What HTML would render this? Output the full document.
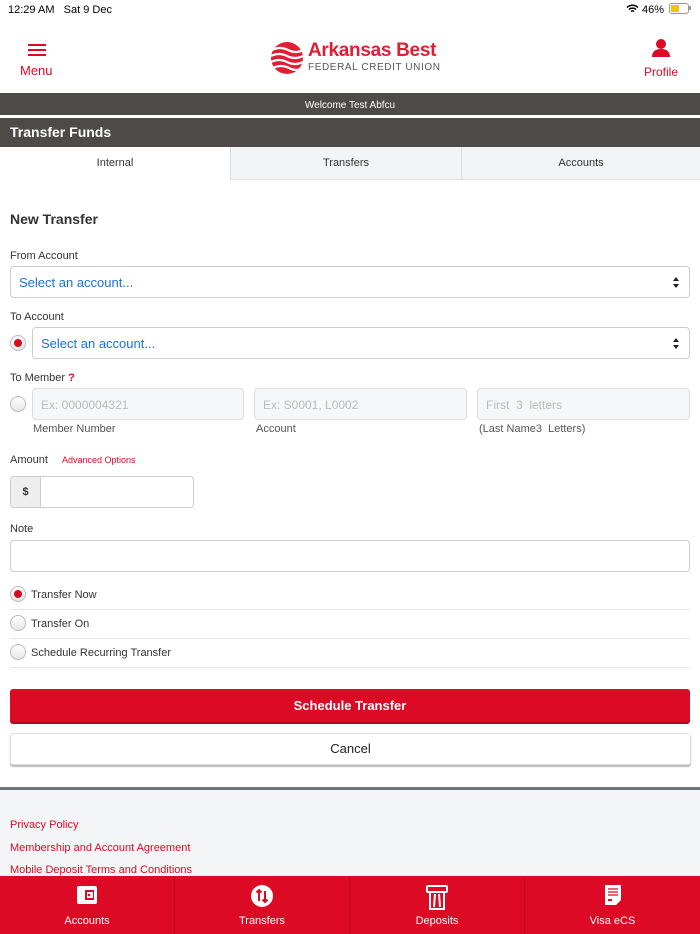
<!DOCTYPE html>
<html><head><meta charset="utf-8"><style>
*{box-sizing:border-box;margin:0;padding:0}
body{width:700px;height:934px;overflow:hidden;background:#fff;font-family:"Liberation Sans",Arial,sans-serif;position:relative;color:#333}
.a{position:absolute}
.lbl{font-size:11px;color:#333}
.sel{position:absolute;height:32px;border:1px solid #ccc;border-radius:4px;background:#fff;font-size:13px;color:#1b6fd8;padding:8px 8px}
.sel:after{content:"";position:absolute;right:10px;top:10px;width:0;height:0;border-left:3px solid transparent;border-right:3px solid transparent;border-bottom:4px solid #222}
.sel:before{content:"";position:absolute;right:10px;top:17px;width:0;height:0;border-left:3px solid transparent;border-right:3px solid transparent;border-top:4px solid #222}
.radio{position:absolute;width:16px;height:16px;border-radius:50%;border:1px solid #bbb;background:linear-gradient(#fff,#e8e8e8)}
.radio.on:after{content:"";position:absolute;left:3px;top:3px;width:8px;height:8px;border-radius:50%;background:#d9091f}
.inp{position:absolute;height:32px;border:1px solid #ddd;border-radius:4px;background:#f6f7f8;font-size:12px;color:#bbb;padding:9px 8px}
.red{color:#dc0a24}
.nav{position:absolute;top:876px;height:58px;width:175px;border-right:1px solid #c90820;color:#fff;font-size:11px;text-align:center}
.nav span{position:absolute;left:0;right:0;top:39px}
.nav svg{position:absolute;left:50%;top:9px;transform:translateX(-50%)}
</style></head><body>
<div class="a" style="left:8px;top:4px;font-size:11px;color:#000">12:29 AM&nbsp;&nbsp;&nbsp;Sat 9 Dec</div>
<div class="a" style="left:626px;top:4px;font-size:11px;color:#000">
<svg width="13" height="10" viewBox="0 0 13 10" style="vertical-align:-1px"><path d="M1 3.5a8 8 0 0 1 11 0M3 5.5a5 5 0 0 1 7 0M5 7.5a2 2 0 0 1 3 0" stroke="#000" stroke-width="1.5" fill="none"/></svg> 46%</div>
<div class="a" style="left:669px;top:3px;width:20px;height:11px;border:1px solid #999;border-radius:3px;padding:1px"><div style="width:8px;height:7px;background:#f4c400"></div></div>
<div class="a" style="left:689px;top:6px;width:2px;height:4px;background:#999"></div>
<div class="a" style="left:28px;top:44px;width:18px;height:2px;background:#dc0a24;box-shadow:0 5px 0 #dc0a24,0 10px 0 #dc0a24"></div>
<div class="a red" style="left:20px;top:63px;font-size:13px">Menu</div>
<svg class="a" style="left:270px;top:40px" width="34" height="36" viewBox="0 0 34 36"><circle cx="17" cy="18" r="16" fill="#e21e35"/><path d="M2 10q8-4 16 0t15 0M1 16q8-4 16 0t16 0M1 22q8-4 16 0t16 0M3 28q8-4 16 0t13 0" stroke="#fff" stroke-width="2.2" fill="none"/></svg>
<div class="a" style="left:308px;top:40px;font-size:19px;font-weight:bold;color:#e21e35;letter-spacing:-0.3px">Arkansas Best</div>
<div class="a" style="left:308px;top:62px;font-size:10px;color:#555;letter-spacing:0.6px">FEDERAL CREDIT UNION</div>
<svg class="a" style="left:651px;top:38px" width="20" height="19" viewBox="0 0 20 19"><circle cx="10" cy="6" r="5" fill="#dc0a24"/><path d="M1 19q0-8 9-8t9 8z" fill="#dc0a24"/></svg>
<div class="a red" style="left:644px;top:65px;font-size:12px">Profile</div>
<div class="a" style="left:0;top:93px;width:700px;height:22px;background:#4e4a48;color:#fff;font-size:10px;text-align:center;line-height:22px;padding-top:2px">Welcome Test Abfcu</div>
<div class="a" style="left:0;top:118px;width:700px;height:29px;background:#4e4a48;color:#fff;font-size:14px;font-weight:bold;line-height:29px;padding-left:10px">Transfer Funds</div>
<div class="a" style="left:230px;top:147px;width:470px;height:33px;background:#f3f4f6;border-left:1px solid #ddd;border-bottom:1px solid #ddd"></div>
<div class="a" style="left:461px;top:147px;width:1px;height:32px;background:#ddd"></div>
<div class="a" style="left:0;top:157px;width:230px;text-align:center;font-size:11px">Internal</div>
<div class="a" style="left:231px;top:157px;width:230px;text-align:center;font-size:11px">Transfers</div>
<div class="a" style="left:462px;top:157px;width:238px;text-align:center;font-size:11px">Accounts</div>
<div class="a" style="left:10px;top:211px;font-size:14px;font-weight:bold;color:#333">New Transfer</div>
<div class="a lbl" style="left:10px;top:250px">From Account</div>
<div class="sel" style="left:10px;top:266px;width:680px">Select an account...</div>
<div class="a lbl" style="left:10px;top:311px">To Account</div>
<div class="radio on" style="left:10px;top:335px"></div>
<div class="sel" style="left:32px;top:327px;width:658px">Select an account...</div>
<div class="a lbl" style="left:10px;top:372px">To Member <b class="red">?</b></div>
<div class="radio" style="left:10px;top:396px"></div>
<div class="inp" style="left:32px;top:388px;width:212px">Ex: 0000004321</div>
<div class="inp" style="left:254px;top:388px;width:213px">Ex: S0001, L0002</div>
<div class="inp" style="left:477px;top:388px;width:213px">First&nbsp; 3&nbsp; letters</div>
<div class="a lbl" style="left:33px;top:423px;color:#555">Member Number</div>
<div class="a lbl" style="left:256px;top:423px;color:#555">Account</div>
<div class="a lbl" style="left:479px;top:423px;color:#555">(Last Name3&nbsp; Letters)</div>
<div class="a lbl" style="left:10px;top:454px">Amount</div>
<div class="a red" style="left:62px;top:455px;font-size:9px">Advanced Options</div>
<div class="a" style="left:10px;top:476px;width:184px;height:32px;border:1px solid #ccc;border-radius:4px;overflow:hidden"><div style="width:30px;height:30px;background:#eee;border-right:1px solid #ccc;font-size:11px;font-weight:bold;text-align:center;line-height:30px">$</div></div>
<div class="a lbl" style="left:10px;top:523px">Note</div>
<div class="a" style="left:10px;top:540px;width:680px;height:32px;border:1px solid #ccc;border-radius:4px"></div>
<div class="radio on" style="left:10px;top:586px"></div>
<div class="a lbl" style="left:31px;top:589px">Transfer Now</div>
<div class="a" style="left:10px;top:609px;width:680px;height:1px;background:#e6e6e6"></div>
<div class="radio" style="left:10px;top:615px"></div>
<div class="a lbl" style="left:31px;top:618px">Transfer On</div>
<div class="a" style="left:10px;top:638px;width:680px;height:1px;background:#e6e6e6"></div>
<div class="radio" style="left:10px;top:644px"></div>
<div class="a lbl" style="left:31px;top:647px">Schedule Recurring Transfer</div>
<div class="a" style="left:10px;top:667px;width:680px;height:1px;background:#e6e6e6"></div>
<div class="a" style="left:10px;top:689px;width:680px;height:33px;background:#dc0a24;border-radius:3px;color:#fff;font-size:13px;font-weight:bold;text-align:center;line-height:33px;box-shadow:0 2px 0 #b0071b">Schedule Transfer</div>
<div class="a" style="left:10px;top:733px;width:681px;height:32px;background:#fff;border:1px solid #ddd;border-radius:3px;color:#222;font-size:13px;text-align:center;line-height:30px;box-shadow:0 2px 1px #bbb">Cancel</div>
<div class="a" style="left:0;top:787px;width:700px;height:89px;background:#f4f5f7;border-top:3px solid #6c7680"></div>
<div class="a red" style="left:10px;top:819px;font-size:11px">Privacy Policy</div>
<div class="a red" style="left:10px;top:842px;font-size:11px">Membership and Account Agreement</div>
<div class="a red" style="left:10px;top:864px;font-size:11px">Mobile Deposit Terms and Conditions</div>
<div class="a" style="left:0;top:876px;width:700px;height:58px;background:#dc0a24"></div>
<div class="nav" style="left:0"><svg width="22" height="20" viewBox="0 0 22 20"><rect x="1" y="1" width="20" height="18" rx="2" fill="#fff"/><rect x="9" y="5" width="9" height="10" fill="#dc0a24"/><rect x="11" y="7" width="6" height="6" fill="#fff"/><circle cx="13" cy="10" r="1.3" fill="#dc0a24"/></svg><span>Accounts</span></div>
<div class="nav" style="left:175px"><svg width="22" height="22" viewBox="0 0 22 22"><circle cx="11" cy="11" r="11" fill="#fff"/><path d="M8 16V5M5.5 7.5L8 5l2.5 2.5M14 6v11M11.5 14.5L14 17l2.5-2.5" stroke="#dc0a24" stroke-width="2" fill="none"/></svg><span>Transfers</span></div>
<div class="nav" style="left:350px"><svg width="22" height="26" viewBox="0 0 22 26"><rect x="1" y="1" width="20" height="6" rx="1" fill="none" stroke="#fff" stroke-width="2"/><path d="M4 7v17h14V7M9 9l-1 13M13 9l1 13" stroke="#fff" stroke-width="2" fill="none"/></svg><span>Deposits</span></div>
<div class="nav" style="left:525px;border-right:none"><svg width="16" height="20" viewBox="0 0 16 20"><path d="M0 0h16v15l-5 5H0z" fill="#fff"/><path d="M3 4h10M3 7h10M3 10h10" stroke="#dc0a24" stroke-width="1.3"/><rect x="3" y="14" width="4" height="2" fill="#dc0a24"/></svg><span>Visa eCS</span></div>
</body></html>
